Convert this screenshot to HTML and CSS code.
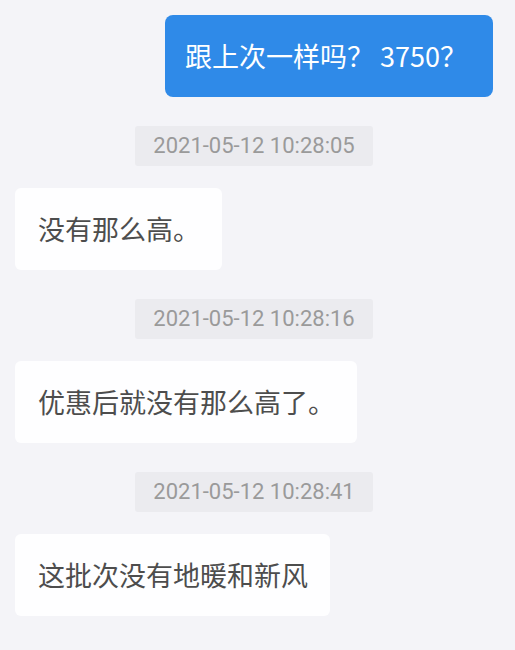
FILE: index.html
```html
<!DOCTYPE html>
<html lang="zh-CN">
<head>
  <meta charset="UTF-8" />
  <meta name="viewport" content="width=device-width, initial-scale=1.0" />
  <title>聊天记录</title>
  <link rel="stylesheet" href="styles.css">
</head>
<body>
  <div class="chat">
    <div class="msg msg-out">
      <div class="bubble bubble-out">跟上次一样吗？ 3750？</div>
    </div>

    <div class="time"><span>2021-05-12 10:28:05</span></div>
    <div class="msg msg-in">
      <div class="bubble">没有那么高。</div>
    </div>

    <div class="time"><span>2021-05-12 10:28:16</span></div>
    <div class="msg msg-in">
      <div class="bubble">优惠后就没有那么高了。</div>
    </div>

    <div class="time"><span>2021-05-12 10:28:41</span></div>
    <div class="msg msg-in">
      <div class="bubble">这批次没有地暖和新风</div>
    </div>
  </div>
</body>
</html>
```

FILE: styles.css
```css
body {
  margin: 0;
  background: #f4f4f8;
  font-family: "Noto Sans CJK SC", "Noto Sans", sans-serif;
  color: #4d4d4d;
}

.chat {
  display: flex;
  flex-direction: column;
  padding: 15px 22px 30px 15px;
}

.msg {
  display: flex;
}

.msg-out {
  justify-content: flex-end;
}

.msg-in {
  justify-content: flex-start;
}

.bubble {
  background: #fefeff;
  border-radius: 6px;
  padding: 22px 22px 22px 23px;
  font-size: 27px;
  line-height: 38px;
  white-space: nowrap;
}

.bubble-out {
  background: #2f8ae8;
  color: #fff;
  border-radius: 8px;
  padding-left: 20px;
  padding-right: 26px;
}

.time {
  display: flex;
  justify-content: center;
  margin: 29px 0 22px;
}

.time span {
  background: #ebebef;
  color: #9a9a9a;
  font-family: Roboto, "Noto Sans", sans-serif;
  font-size: 22px;
  line-height: 28px;
  padding: 6px 18px;
  border-radius: 3px;
}
```
